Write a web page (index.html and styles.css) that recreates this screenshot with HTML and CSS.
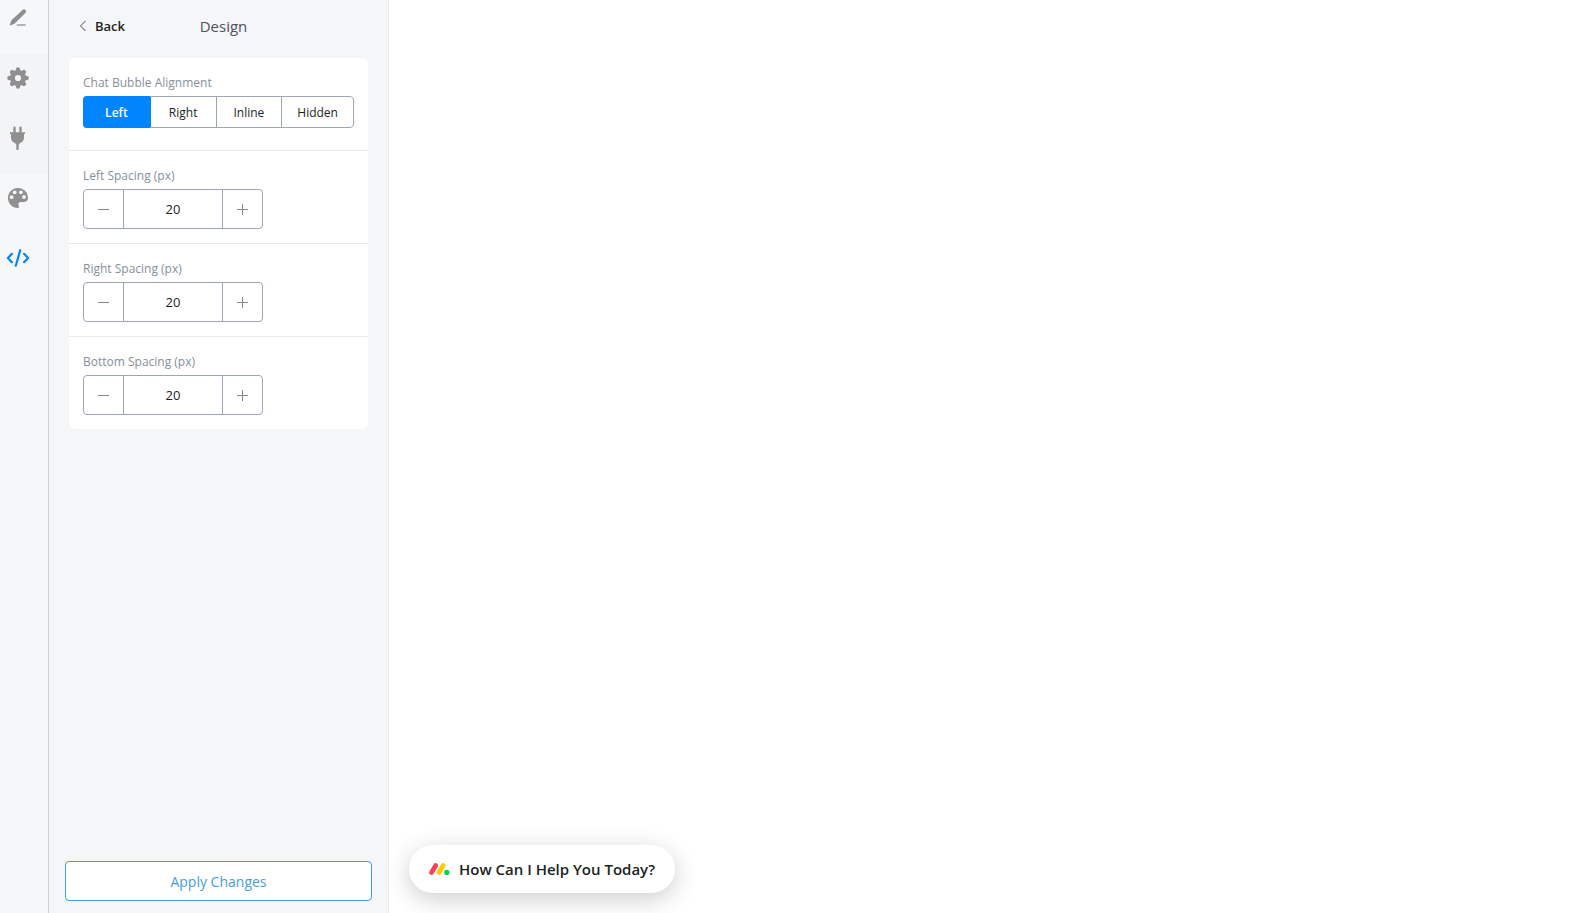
FILE: index.html
```html
<!DOCTYPE html>
<html lang="en">
<head>
<meta charset="utf-8">
<meta name="viewport" content="width=device-width, initial-scale=1">
<title>Design</title>
<link rel="stylesheet" href="styles.css">
</head>
<body>
<div class="app">
  <nav class="rail" aria-label="Sections">
    <button class="rail-tab rail-tab-first" type="button" aria-label="Edit">
      <svg class="rail-icon" viewBox="0 0 24 24"><path d="M17.500 4.100a1.400 1.400 0 0 1 1.600 2.100L8.500 16.800 4.600 18.600 6.200 14.600z" fill="#8f8f8f" stroke="#8f8f8f" stroke-width="1.400" stroke-linejoin="round"/><path d="M11.500 19h7.500" stroke="#b4b5b6" stroke-width="1.800" stroke-linecap="round"/></svg>
    </button>
    <button class="rail-tab rail-tab-shaded" type="button" aria-label="Settings">
      <svg class="rail-icon" viewBox="0 0 24 24"><g stroke="#8f8f8f" stroke-width="4.400" stroke-linecap="round"><path d="M12 3.400v17.200M3.400 12h17.200M6.100 6.100l11.800 11.800M17.900 6.100 6.100 17.900"/></g><circle cx="12" cy="12" r="8" fill="#8f8f8f"/><circle cx="12" cy="12" r="3.100" fill="#f3f4f6"/></svg>
    </button>
    <button class="rail-tab rail-tab-shaded" type="button" aria-label="Integrations">
      <svg class="rail-icon" viewBox="0 0 24 24"><path d="M8.500 1.800v4M14.500 1.800v4M11.500 17v6" stroke="#8f8f8f" stroke-width="2.400" stroke-linecap="round"/><path d="M4 6.300h15v1.800h-1v3.400c0 3.300-2 5.300-4.500 5.700v1h-4v-1C7 16.800 5 14.800 5 11.500V8.100H4z" fill="#8f8f8f"/></svg>
    </button>
    <button class="rail-tab" type="button" aria-label="Theme">
      <svg class="rail-icon" viewBox="0 0 24 24"><path d="M12 2C6.300 2 2 6.400 2 12s4.300 10 9.800 10c1.300 0 1.500-1.200.9-2.200-1-1.900 0-3.900 2.200-3.900h3.300c2.500 0 3.800-1.400 3.800-3.800C22 6.200 17.500 2 12 2z" fill="#8f8f8f"/><g fill="#f5f6f8"><circle cx="8.700" cy="6.300" r="1.900"/><circle cx="14.900" cy="6.300" r="1.900"/><circle cx="5.600" cy="11.200" r="1.900"/><circle cx="18" cy="11" r="1.900"/></g></svg>
    </button>
    <button class="rail-tab" type="button" aria-label="Embed" aria-current="page">
      <svg class="rail-icon" viewBox="0 0 24 24" fill="none" stroke="#0085ff" stroke-width="2.200" stroke-linecap="round" stroke-linejoin="round"><path d="M5.900 7.800 1.900 12l4 4.200M18.100 7.800l4 4.200-4 4.200M14.200 4.200 9.800 19.800"/></svg>
    </button>
  </nav>

  <aside class="panel">
    <header class="panel-header">
      <button class="back" type="button">
        <svg class="back-icon" viewBox="0 0 8 12" fill="none" stroke="#444b54"><path d="M6.500 1 1.500 6l5 5"/></svg>
        Back
      </button>
      <h1 class="panel-title">Design</h1>
    </header>

    <div class="card">
      <fieldset class="section">
        <legend class="label">Chat Bubble Alignment</legend>
        <div class="segments">
          <label class="segment"><input class="segment-input" type="radio" name="align" checked>Left</label>
          <label class="segment"><input class="segment-input" type="radio" name="align">Right</label>
          <label class="segment"><input class="segment-input" type="radio" name="align">Inline</label>
          <label class="segment"><input class="segment-input" type="radio" name="align">Hidden</label>
        </div>
      </fieldset>
      <div class="section">
        <label class="label" for="left">Left Spacing (px)</label>
        <div class="stepper">
          <button class="step" type="button" aria-label="Decrease"><svg class="step-icon" viewBox="0 0 11 11"><path d="M0 5.500h11"/></svg></button>
          <input class="step-value" id="left" type="text" inputmode="numeric" value="20">
          <button class="step" type="button" aria-label="Increase"><svg class="step-icon" viewBox="0 0 11 11"><path d="M0 5.500h11M5.500 0v11"/></svg></button>
        </div>
      </div>
      <div class="section">
        <label class="label" for="right">Right Spacing (px)</label>
        <div class="stepper">
          <button class="step" type="button" aria-label="Decrease"><svg class="step-icon" viewBox="0 0 11 11"><path d="M0 5.500h11"/></svg></button>
          <input class="step-value" id="right" type="text" inputmode="numeric" value="20">
          <button class="step" type="button" aria-label="Increase"><svg class="step-icon" viewBox="0 0 11 11"><path d="M0 5.500h11M5.500 0v11"/></svg></button>
        </div>
      </div>
      <div class="section">
        <label class="label" for="bottom">Bottom Spacing (px)</label>
        <div class="stepper">
          <button class="step" type="button" aria-label="Decrease"><svg class="step-icon" viewBox="0 0 11 11"><path d="M0 5.500h11"/></svg></button>
          <input class="step-value" id="bottom" type="text" inputmode="numeric" value="20">
          <button class="step" type="button" aria-label="Increase"><svg class="step-icon" viewBox="0 0 11 11"><path d="M0 5.500h11M5.500 0v11"/></svg></button>
        </div>
      </div>
    </div>

    <button class="apply" type="button">Apply Changes</button>
  </aside>

  <main class="preview">
    <button class="bubble" type="button">
      <svg class="bubble-logo" viewBox="0 0 22 14"><path d="M2.500 10.500 6.700 3.500" stroke="#ff3d57" stroke-width="4.600" stroke-linecap="round"/><path d="M10 10.500 14.200 3.500" stroke="#ffcb00" stroke-width="4.600" stroke-linecap="round"/><circle cx="17.800" cy="10.400" r="2.600" fill="#00d647"/></svg>
      How Can I Help You Today?
    </button>
  </main>
</div>
</body>
</html>
```
FILE: styles.css
```css
* {
  box-sizing: border-box;
}

body {
  margin: 0;
  background: #fff;
  color: #1c1f23;
  font-family: "Open Sans", "Noto Sans", sans-serif;
  font-size: 12px;
}

button,
input {
  margin: 0;
  padding: 0;
  border: 0;
  background: none;
  color: inherit;
  font: inherit;
}

button {
  cursor: pointer;
}

svg {
  display: block;
  flex: none;
}

.app {
  display: flex;
  min-height: 100vh;
}

/* Icon rail */
.rail {
  display: flex;
  flex: none;
  flex-direction: column;
  width: 49px;
  border-right: 1px solid #c9d0d9;
  background: #f5f7f9;
}

.rail-tab {
  display: flex;
  height: 60px;
  padding: 12px 6px;
}

.rail-tab-first {
  height: 54px;
  padding-top: 6px;
}

.rail-tab-shaded {
  background: #f3f4f6;
}

.rail-icon {
  width: 24px;
  height: 24px;
}

/* Settings panel */
.panel {
  display: flex;
  flex: none;
  flex-direction: column;
  width: 340px;
  padding: 0 16px 12px;
  border-right: 1px solid #e9eaec;
  background: #f5f6f8;
}

.panel-header {
  display: grid;
  grid-template-columns: 1fr auto 1fr;
  align-items: center;
  height: 58px;
  padding: 0 4px 6px 14px;
}

.back {
  display: flex;
  align-items: center;
  justify-self: start;
  gap: 8px;
  font-size: 13px;
  font-weight: 600;
}

.back-icon {
  width: 8px;
  height: 12px;
}

.panel-title {
  margin: 0;
  color: #4b535d;
  font-size: 15px;
  font-weight: 400;
}

.card {
  margin: 0 4px auto;
  border-radius: 6px;
  background: #fff;
}

.section {
  min-width: 0;
  margin: 0;
  padding: 14px;
  border: 0;
}

.section + .section {
  border-top: 1px solid #e8eaf1;
}

fieldset.section {
  padding-bottom: 22px;
}

.label {
  display: block;
  margin-bottom: 2px;
  padding: 0;
  color: #86909d;
  line-height: 22px;
}

fieldset .label {
  float: left;
  width: 100%;
}

.segments {
  display: grid;
  grid-template-columns: 1fr 1fr 1fr auto;
  clear: both;
  height: 32px;
  border: 1px solid #9ea5b5;
  border-radius: 4px;
}

.segment {
  display: flex;
  align-items: center;
  justify-content: center;
  padding: 0 15px;
  cursor: pointer;
  font-weight: 500;
}

.segment + .segment {
  border-left: 1px solid #9ea5b5;
}

.segment:has(:checked) {
  margin: -1px 0 -1px -1px;
  border-radius: 4px 0 0 4px;
  background: #0085ff;
  color: #fff;
  font-weight: 600;
}

.segment:has(:checked) + .segment {
  border-left-color: #0085ff;
}

.segment-input {
  width: 0;
  height: 0;
  margin: 0;
  appearance: none;
}

.stepper {
  display: flex;
  width: 180px;
  height: 40px;
  border: 1px solid #9ea5b5;
  border-radius: 4px;
}

.step {
  display: flex;
  flex: none;
  align-items: center;
  justify-content: center;
  width: 39px;
}

.step-icon {
  width: 11px;
  height: 11px;
  fill: none;
  stroke: #858990;
}

.step-value {
  flex: 1;
  min-width: 0;
  border: solid #9ea5b5;
  border-width: 0 1px;
  font-size: 13px;
  text-align: center;
}

.apply {
  height: 40px;
  border: 1px solid #3d9fdb;
  border-radius: 4px;
  background: #fff;
  color: #459fdc;
  font-size: 14px;
  font-weight: 500;
}

/* Preview */
.preview {
  display: flex;
  flex: 1;
  align-items: flex-end;
  min-width: 0;
  padding: 20px;
}

.bubble {
  display: flex;
  align-items: center;
  gap: 8px;
  height: 48px;
  padding: 0 20px;
  border-radius: 24px;
  background: #fff;
  box-shadow: 0 6px 24px rgba(0, 0, 0, 0.2);
  font-size: 15px;
  font-weight: 600;
}

.bubble-logo {
  width: 22px;
  height: 14px;
}
```
